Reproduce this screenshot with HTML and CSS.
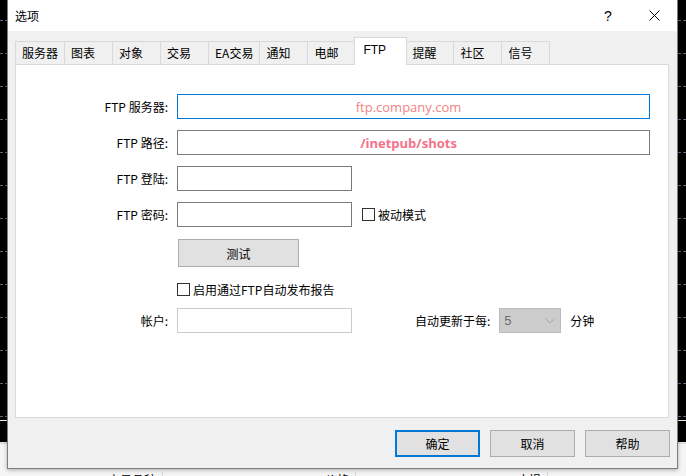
FILE: index.html
```html
<!DOCTYPE html>
<html lang="zh-CN">
<head>
    <meta charset="UTF-8">
    <title>选项</title>
    <link rel="stylesheet" href="styles.css">
</head>
<body>
<div class="desk">
    <div class="chart">
        <div class="gline"></div><div class="gline"></div><div class="gline"></div>
        <div class="gline"></div><div class="gline"></div><div class="gline"></div>
        <div class="gline"></div><div class="gline"></div><div class="gline"></div>
        <div class="gline"></div><div class="gline"></div><div class="gline"></div>
        <div class="gline"></div>
    </div>
    <div class="timebar"></div>
    <div class="table-head">
        <span class="col col1">交易品种</span>
        <span class="col col2">价格</span>
        <span class="col col3">止损</span>
    </div>
</div>

<div class="dialog">
    <div class="titlebar">
        <span class="title">选项</span>
        <span class="tb-btn">?</span>
        <span class="tb-btn">
            <svg width="11" height="11" viewBox="0 0 11 11"><path d="M0.5 0.5 L10.5 10.5 M10.5 0.5 L0.5 10.5" stroke="#000" stroke-width="1" fill="none"/></svg>
        </span>
    </div>

    <div class="content">
        <div class="tabs">
            <span class="tab">服务器</span>
            <span class="tab">图表</span>
            <span class="tab">对象</span>
            <span class="tab">交易</span>
            <span class="tab">EA交易</span>
            <span class="tab">通知</span>
            <span class="tab">电邮</span>
            <span class="tab active">FTP</span>
            <span class="tab">提醒</span>
            <span class="tab">社区</span>
            <span class="tab">信号</span>
        </div>

        <div class="panel">
            <div class="row">
                <label class="lbl">FTP 服务器:</label>
                <div class="field wide focus"><span class="val">ftp.company.com</span></div>
            </div>
            <div class="row">
                <label class="lbl">FTP 路径:</label>
                <div class="field wide"><span class="val bold">/inetpub/shots</span></div>
            </div>
            <div class="row">
                <label class="lbl">FTP 登陆:</label>
                <div class="field short"></div>
            </div>
            <div class="row">
                <label class="lbl">FTP 密码:</label>
                <div class="field short"></div>
                <span class="check passive"><span class="box"></span>被动模式</span>
            </div>

            <button class="btn test">测试</button>

            <div class="check publish"><span class="box"></span>启用通过FTP自动发布报告</div>

            <div class="row">
                <label class="lbl">帐户:</label>
                <div class="field short dim"></div>
                <span class="lbl2">自动更新于每:</span>
                <div class="select">
                    <span>5</span>
                    <svg width="10" height="6" viewBox="0 0 10 6"><path d="M0.5 0.5 L5 5 L9.5 0.5" stroke="#a8a8a8" stroke-width="1" fill="none"/></svg>
                </div>
                <span class="unit">分钟</span>
            </div>
        </div>

        <div class="footer">
            <button class="btn ok">确定</button>
            <button class="btn">取消</button>
            <button class="btn">帮助</button>
        </div>
    </div>
</div>
</body>
</html>
```
FILE: styles.css
```css
html, body {
    margin: 0;
    width: 686px;
    height: 476px;
    overflow: hidden;
}

body {
    background: #000;
    font-family: "Noto Sans CJK SC", "Noto Sans", sans-serif;
    font-size: 12px;
    color: #000;
}

/* terminal behind the dialog */
.chart {
    height: 420px;
    box-sizing: border-box;
    padding-top: 20px;
    background: #000;
}

.gline {
    height: 33px;
    box-sizing: border-box;
    border-top: 1px dashed #5a6878;
}

.timebar {
    height: 21px;
    background: #000;
    border-top: 1px solid #e8e8e8;
    border-bottom: 1px solid #e8e8e8;
}

.table-head {
    height: 33px;
    background: #f5f5f5;
    display: flex;
    padding-top: 28px;
    box-sizing: border-box;
    border-top: 1px solid #d8d8d8;
}

.col {
    text-align: right;
    line-height: 16px;
    border-right: 1px solid #d8d8d8;
    padding-right: 6px;
    box-sizing: border-box;
}

.col1 { width: 163px; }
.col2 { width: 193px; }
.col3 { width: 192px; }

/* dialog window */
.dialog {
    position: absolute;
    left: 7px;
    top: 0;
    width: 671px;
    height: 469px;
    box-sizing: border-box;
    background: #f0f0f0;
    border: 1px solid #7d7d7d;
    border-top: none;
    box-shadow: 0 1px 4px rgba(0, 0, 0, 0.3);
}

.titlebar {
    height: 31px;
    background: #fff;
    display: flex;
    align-items: center;
    padding-left: 7px;
}

.title {
    flex: 1;
    font-size: 12px;
}

.tb-btn {
    width: 46px;
    height: 31px;
    display: flex;
    align-items: center;
    justify-content: center;
    font-family: "Liberation Sans", sans-serif;
    font-size: 14px;
}

.content {
    padding: 10px 8px 0 7px;
}

.tabs {
    display: flex;
    align-items: flex-end;
    height: 23px;
    padding-left: 1px;
}

.tab {
    height: 23px;
    min-width: 49px;
    box-sizing: border-box;
    padding: 0 6px;
    margin-left: -1px;
    line-height: 22px;
    background: #f0f0f0;
    border: 1px solid #d9d9d9;
    border-bottom: none;
}

.tab.active {
    position: relative;
    z-index: 1;
    height: 28px;
    min-width: 53px;
    margin: 0 -1px -1px -2px;
    padding: 0 8px;
    line-height: 24px;
    background: #fff;
    font-family: "Liberation Sans", sans-serif;
    font-size: 12px;
}

.panel {
    height: 354px;
    box-sizing: border-box;
    background: #fff;
    border: 1px solid #d9d9d9;
    padding-top: 29px;
}

.row {
    display: flex;
    align-items: center;
    height: 25px;
    margin-bottom: 11px;
}

.lbl {
    width: 152px;
    margin-right: 9px;
    text-align: right;
}

.field {
    height: 25px;
    box-sizing: border-box;
    border: 1px solid #7a7a7a;
    background: #fff;
    display: flex;
    align-items: center;
    justify-content: center;
}

.field.wide { width: 473px; }
.field.short { width: 175px; }
.field.focus { border-color: #0078d7; }
.field.dim { border-color: #cccccc; }

.val {
    font-family: "Open Sans", "Noto Sans", sans-serif;
    font-size: 13px;
    color: #f38383;
    margin-right: 10px;
}

.val.bold {
    font-weight: bold;
    color: #f5728a;
}

.check {
    display: flex;
    align-items: center;
}

.box {
    width: 13px;
    height: 13px;
    box-sizing: border-box;
    border: 1px solid #333;
    background: #fff;
    margin-right: 3px;
}

.passive {
    margin-left: 10px;
}

.publish {
    margin: 16px 0 12px 161px;
    height: 13px;
}

.btn {
    height: 27px;
    box-sizing: border-box;
    background: #e1e1e1;
    border: 1px solid #adadad;
    font-family: "Noto Sans CJK SC", sans-serif;
    font-size: 12px;
    color: #000;
    padding: 0;
}

.test {
    display: block;
    width: 121px;
    height: 28px;
    margin: 12px 0 0 162px;
}

.lbl2 {
    margin-left: 63px;
}

.select {
    width: 62px;
    height: 25px;
    margin-left: 9px;
    box-sizing: border-box;
    background: #cccccc;
    border: 1px solid #bcbcbc;
    display: flex;
    align-items: center;
    justify-content: space-between;
    padding: 0 5px 0 4px;
    color: #6d6d6d;
    font-family: "Liberation Sans", sans-serif;
    font-size: 13px;
}

.unit {
    margin-left: 9px;
}

.footer {
    display: flex;
    justify-content: flex-end;
    gap: 10px;
    padding: 12px 0 0 0;
    margin-right: -1px;
}

.footer .btn {
    width: 85px;
}

.btn.ok {
    border: 2px solid #0078d7;
}
```
